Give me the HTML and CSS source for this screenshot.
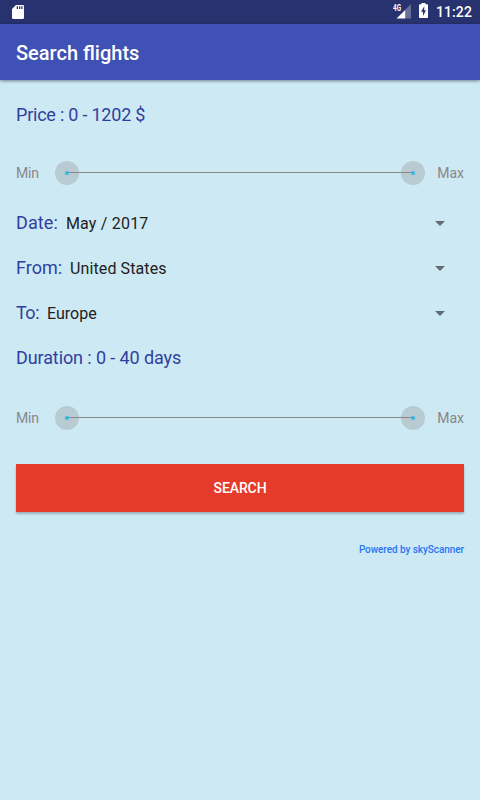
FILE: index.html
```html
<!DOCTYPE html>
<html lang="en">
  <head>
    <meta charset="UTF-8" />
    <meta name="viewport" content="width=device-width, initial-scale=1.0" />
    <title>Search flights</title>
    <link rel="stylesheet" href="styles.css">
  </head>
  <body>
    <div class="status-bar">
      <svg class="icon-sd" width="12" height="14" viewBox="0 0 12 14">
        <path fill="#fff" fill-rule="evenodd" d="M4 0h6.700Q12 0 12 1.300v11.400Q12 14 10.700 14H1.300Q0 14 0 12.700V4zM4.700 1.300v2.700h1.300V1.300zM7 1.300v2.700h1.300V1.300zM9.300 1.300v2.700h1.300V1.300z" />
      </svg>
      <div class="status-icons">
        <svg class="icon-signal" width="18" height="16" viewBox="0 0 18 16">
          <path fill="#fff" opacity="0.3" d="M18 0v14.500H12V6z" />
          <path fill="#fff" d="M12.200 6V14.500H3.500z" />
          <text x="0" y="7" textLength="8" lengthAdjust="spacingAndGlyphs">4G</text>
        </svg>
        <svg class="icon-battery" width="9" height="15" viewBox="0 0 9 15">
          <path fill="#fff" d="M2.500 0h4v1.300H8.200Q9 1.300 9 2v12.200Q9 15 8.200 15H.8Q0 15 0 14.200V2Q0 1.300.8 1.300h1.700z" />
          <path fill="#27326e" d="M5.300 3.200 2 8.700h2V13l3-5.700H5.200z" />
        </svg>
        <span class="clock">11:22</span>
      </div>
    </div>

    <header class="toolbar">
      <h1>Search flights</h1>
    </header>

    <main>
      <p class="label label-price">Price : 0 - 1202 $</p>
      <div class="range">
        <span class="range-text">Min</span>
        <div class="range-track">
          <span class="thumb"></span>
          <span class="line"></span>
          <span class="thumb"></span>
        </div>
        <span class="range-text">Max</span>
      </div>

      <div class="field">
        <span class="label label-date">Date:</span>
        <span class="field-value">May / 2017</span>
        <span class="arrow"></span>
      </div>
      <div class="field">
        <span class="label">From:</span>
        <span class="field-value">United States</span>
        <span class="arrow"></span>
      </div>
      <div class="field">
        <span class="label label-to">To:</span>
        <span class="field-value">Europe</span>
        <span class="arrow"></span>
      </div>

      <p class="label label-duration">Duration : 0 - 40 days</p>
      <div class="range">
        <span class="range-text">Min</span>
        <div class="range-track">
          <span class="thumb"></span>
          <span class="line"></span>
          <span class="thumb"></span>
        </div>
        <span class="range-text">Max</span>
      </div>

      <button class="search-button" type="button">SEARCH</button>
      <p class="powered">Powered by skyScanner</p>
    </main>
  </body>
</html>
```

FILE: styles.css
```css
* {
  box-sizing: border-box;
  padding: 0;
  margin: 0;
}

body {
  min-height: 800px;
  font-family: Roboto, sans-serif;
  font-size: 16px;
  color: #212121;
  background-color: #cde9f4;
}

.status-bar {
  display: flex;
  justify-content: space-between;
  height: 24px;
  padding: 0 8px 0 12px;
  color: #fff;
  background: #27326e;
}

.icon-sd {
  margin-top: 5px;
}

.status-icons {
  display: flex;
}

.icon-signal {
  margin-top: 4px;
}

.icon-signal text {
  font-size: 8.5px;
  font-weight: 700;
  fill: #fff;
}

.icon-battery {
  margin: 3px 8px 0;
}

.clock {
  font-size: 14px;
  font-weight: 500;
  line-height: 25px;
  letter-spacing: 0.1px;
}

.toolbar {
  display: flex;
  align-items: center;
  height: 56px;
  padding: 2px 16px 0;
  color: #fff;
  background: #3f51b5;
  box-shadow: 0 1px 3px rgba(0, 0, 0, 0.45);
}

.toolbar h1 {
  font-size: 20px;
  font-weight: 500;
}

main {
  padding: 23px 16px 0;
}

.label {
  font-size: 18px;
  line-height: 24px;
  color: #303f9f;
}

.label-price {
  letter-spacing: -0.22px;
}

.label-date {
  letter-spacing: 0.1px;
}

.label-to {
  letter-spacing: -0.5px;
}

.range {
  display: flex;
  align-items: center;
  justify-content: space-between;
  height: 24px;
  margin-top: 34px;
}

.range-text {
  font-size: 14px;
  line-height: 24px;
  color: #888;
}

.range-text:first-child {
  width: 23px;
  letter-spacing: -0.2px;
}

.range-track {
  display: flex;
  width: 370px;
  height: 24px;
  margin-right: auto;
  margin-left: 16px;
}

.thumb {
  display: flex;
  flex: none;
  align-items: center;
  justify-content: center;
  width: 24px;
  height: 24px;
  background: #b8cbd2;
  border-radius: 50%;
}

.thumb::after {
  width: 4px;
  height: 4px;
  content: "";
  background: #33b5e5;
  border-radius: 50%;
}

/* the line runs between the thumb centres */
.line {
  z-index: 1;
  flex: 1;
  height: 1px;
  margin: 11px -10px 0;
  background: #888;
}

.field {
  display: flex;
  align-items: center;
  height: 45px;
  padding-right: 19px;
}

.range + .field {
  margin-top: 15px;
}

.field-value {
  padding-top: 2px;
  margin-left: 8px;
  line-height: 24px;
  letter-spacing: 0.1px;
}

.label-date + .field-value {
  letter-spacing: 0.2px;
}

.label-to + .field-value {
  letter-spacing: 0;
}

.arrow {
  margin-top: 1px;
  margin-left: auto;
  border: 5px solid transparent;
  border-top-color: #5f6c70;
  border-bottom: 0;
}

.label-duration {
  margin-top: 11px;
  letter-spacing: -0.1px;
}

.label-duration + .range {
  margin-top: 36px;
}

.search-button {
  display: block;
  width: 100%;
  height: 48px;
  margin-top: 34px;
  font: 500 14px/48px Roboto, sans-serif;
  color: #fff;
  letter-spacing: -0.1px;
  background: #e43b2b;
  border: none;
  box-shadow: 0 2px 2px rgba(0, 0, 0, 0.24);
}

.powered {
  margin-top: 30px;
  font-size: 10px;
  font-weight: 500;
  line-height: 16px;
  color: #2a75f3;
  letter-spacing: -0.07px;
  text-align: right;
}
```
